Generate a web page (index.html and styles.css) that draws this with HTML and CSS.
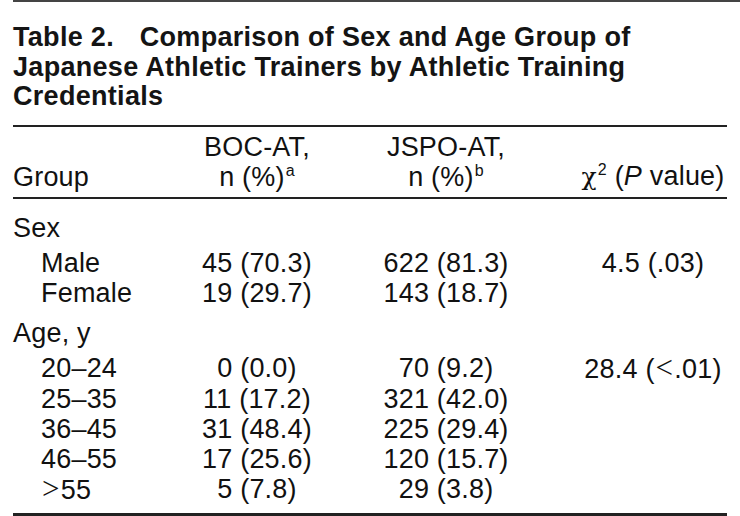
FILE: index.html
```html
<!DOCTYPE html>
<html>
<head>
<meta charset="utf-8">
<title>Table 2</title>
<link rel="stylesheet" href="styles.css">
</head>
<body>
<div class="page">
  <div class="top-rule"></div>
  <h1 class="title"><span class="label">Table 2.</span> Comparison of Sex and Age Group of<br>Japanese Athletic Trainers by Athletic Training<br>Credentials</h1>
  <table class="data">
    <colgroup>
      <col class="c1"><col class="c2"><col class="c3"><col class="c4">
    </colgroup>
    <thead>
      <tr>
        <th class="lead">Group</th>
        <th>BOC-AT,<br>n (%)<sup>a</sup></th>
        <th>JSPO-AT,<br>n (%)<sup>b</sup></th>
        <th><span class="chi">χ</span><sup>2</sup> (<i>P</i> value)</th>
      </tr>
    </thead>
    <tbody>
      <tr class="grp first-grp"><td class="lead" colspan="4">Sex</td></tr>
      <tr class="sub first"><td class="lead">Male</td><td>45 (70.3)</td><td>622 (81.3)</td><td>4.5 (.03)</td></tr>
      <tr class="sub"><td class="lead">Female</td><td>19 (29.7)</td><td>143 (18.7)</td><td></td></tr>
      <tr class="grp"><td class="lead" colspan="4">Age, y</td></tr>
      <tr class="sub first"><td class="lead">20–24</td><td>0 (0.0)</td><td>70 (9.2)</td><td>28.4 (<span class="sym">&lt;</span>.01)</td></tr>
      <tr class="sub"><td class="lead">25–35</td><td>11 (17.2)</td><td>321 (42.0)</td><td></td></tr>
      <tr class="sub"><td class="lead">36–45</td><td>31 (48.4)</td><td>225 (29.4)</td><td></td></tr>
      <tr class="sub"><td class="lead">46–55</td><td>17 (25.6)</td><td>120 (15.7)</td><td></td></tr>
      <tr class="sub last"><td class="lead"><span class="sym">&gt;</span>55</td><td>5 (7.8)</td><td>29 (3.8)</td><td></td></tr>
    </tbody>
  </table>
</div>
</body>
</html>
```

FILE: styles.css
```css
html, body {
  margin: 0;
  padding: 0;
  background: #ffffff;
}

body {
  font-family: "Liberation Sans", Arial, sans-serif;
  color: #111111;
}

.page {
  width: 714px;
  padding-left: 13px;
}

.top-rule {
  height: 0;
  border-top: 2px solid #444444;
  margin-right: -13px;
}

.title {
  margin: 21px 0 0 0;
  font-size: 27px;
  font-weight: bold;
  letter-spacing: 0.3px;
  line-height: 29.5px;
  color: #141414;
  padding-bottom: 13px;
  border-bottom: 2px solid #222222;
  white-space: nowrap;
}

.title .label {
  margin-right: 18px;
}

.data {
  width: 714px;
  border-collapse: collapse;
  table-layout: fixed;
  font-size: 27px;
  letter-spacing: 0.2px;
  line-height: 30px;
  border-bottom: 3px solid #222222;
}

.c1 { width: 188px; }
.c2 { width: 112px; }
.c3 { width: 266px; }
.c4 { width: 148px; }

.data th {
  font-weight: normal;
  text-align: center;
  vertical-align: bottom;
  padding: 5px 0 5px 0;
  white-space: nowrap;
  border-bottom: 2px solid #222222;
}

.data td {
  padding: 0;
  text-align: center;
  white-space: nowrap;
}

.data .lead {
  text-align: left;
}

.data sup {
  font-size: 16px;
  line-height: 0;
  vertical-align: 9.5px;
  margin-left: 1px;
}

.chi {
  font-family: "DejaVu Serif", "Liberation Serif", serif;
  font-size: 25px;
}

.sym {
  font-family: "Liberation Serif", serif;
  font-size: 31px;
  padding: 0 1px;
}

.data tr.grp td {
  padding-top: 14px;
}

.data tr.grp:not(.first-grp) td {
  padding-top: 10px;
}

.data tr.sub td.lead {
  padding-left: 28px;
}

.data tr.first td {
  padding-top: 5px;
}

.data tr.last td {
  padding-bottom: 8px;
}
```
